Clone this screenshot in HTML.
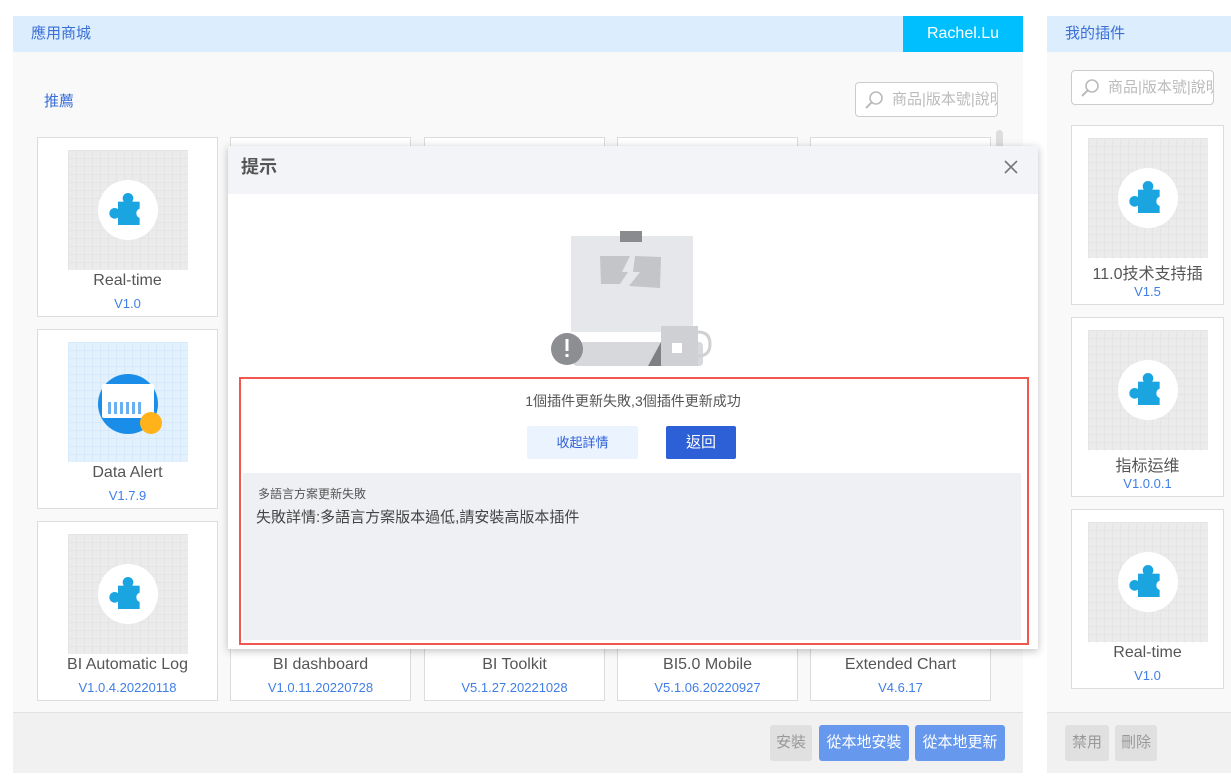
<!DOCTYPE html>
<html><head><meta charset="utf-8">
<style>
*{margin:0;padding:0;box-sizing:border-box}
body{width:1231px;height:780px;background:#fff;position:relative;overflow:hidden;font-family:"Liberation Sans","Noto Sans CJK TC",sans-serif}
.abs{position:absolute}
.hdr{background:#dcedfd;color:#3a6fd8;font-size:15px;line-height:36px;padding-left:18px}
.card{position:absolute;width:181px;height:180px;background:#fff;border:1px solid #dcdcdc;text-align:center}
.card .img{position:absolute;left:30px;top:12px;width:120px;height:120px;background-color:#ebebeb;background-image:linear-gradient(#e4e4e4 1px,transparent 1px),linear-gradient(90deg,#e4e4e4 1px,transparent 1px);background-size:8px 8px}
.card .circ{position:absolute;left:30px;top:30px;width:60px;height:60px;border-radius:50%;background:#fff}
.card .circ svg{position:absolute;left:10px;top:10px}
.card .nm{position:absolute;left:0;right:0;top:134px;font-size:16px;color:#555}
.card .vr{position:absolute;left:0;right:0;top:158px;font-size:13px;color:#3f7ee8}
.btn{position:absolute;height:36px;line-height:36px;text-align:center;font-size:15px;border-radius:3px}
</style></head><body>
<div class="abs" style="left:13px;top:16px;width:1010px;height:757px;background:#f9f9f9"></div>
<div class="abs hdr" style="left:13px;top:16px;width:1010px;height:36px">應用商城</div>
<div class="abs" style="left:903px;top:16px;width:120px;height:36px;background:#00bfff;color:#fff;font-size:16px;line-height:36px;text-align:center">Rachel.Lu</div>
<div class="abs" style="left:44px;top:90px;color:#3a6fd8;font-size:15px">推薦</div>
<div class="abs" style="left:855px;top:82px;width:143px;height:35px;border:1px solid #ccc;border-radius:4px;background:#fff;overflow:hidden;white-space:nowrap;color:#bbb;font-size:15px;line-height:33px;padding-left:36px">商品|版本號|說明
<svg class="abs" style="left:8px;top:7px" width="20" height="20" viewBox="0 0 20 20"><circle cx="12" cy="8" r="6" fill="none" stroke="#bbb" stroke-width="1.6"/><path d="M8 12 L2 18" stroke="#bbb" stroke-width="2"/></svg></div>
<div class="abs" style="left:996px;top:130px;width:7px;height:30px;border-radius:4px;background:#ddd"></div>
<div class="abs" style="left:13px;top:712px;width:1010px;height:61px;background:#f1f1f1;border-top:1px solid #e2e2e2"></div>
<div class="btn" style="left:770px;top:725px;width:42px;background:#e0e0e0;color:#999">安裝</div>
<div class="btn" style="left:819px;top:725px;width:90px;background:#6699ee;color:#fff">從本地安裝</div>
<div class="btn" style="left:915px;top:725px;width:90px;background:#6699ee;color:#fff">從本地更新</div>

<div class="abs" style="left:1047px;top:16px;width:190px;height:757px;background:#f9f9f9"></div>
<div class="abs hdr" style="left:1047px;top:16px;width:190px;height:36px">我的插件</div>
<div class="abs" style="left:1071px;top:70px;width:143px;height:35px;border:1px solid #ccc;border-radius:4px;background:#fff;overflow:hidden;white-space:nowrap;color:#bbb;font-size:15px;line-height:33px;padding-left:36px">商品|版本號|說明
<svg class="abs" style="left:8px;top:7px" width="20" height="20" viewBox="0 0 20 20"><circle cx="12" cy="8" r="6" fill="none" stroke="#bbb" stroke-width="1.6"/><path d="M8 12 L2 18" stroke="#bbb" stroke-width="2"/></svg></div>
<div class="abs" style="left:1047px;top:712px;width:190px;height:61px;background:#f1f1f1;border-top:1px solid #e2e2e2"></div>
<div class="btn" style="left:1065px;top:725px;width:44px;background:#e0e0e0;color:#999">禁用</div>
<div class="btn" style="left:1115px;top:725px;width:42px;background:#e0e0e0;color:#999">刪除</div>

<svg width="0" height="0" style="position:absolute"><defs>
<symbol id="pz" viewBox="4 2 24 24"><g fill="#1aa5e0"><rect x="10" y="9" width="13" height="14"/><circle cx="16" cy="7" r="3.2"/><circle cx="8" cy="16" r="3.2"/></g><circle cx="24" cy="16" r="3" fill="#fff"/></symbol>
</defs></svg>

<div class="card" style="left:37px;top:137px"><div class="img"><div class="circ"><svg width="40" height="40"><use href="#pz"/></svg></div></div><div class="nm">Real-time</div><div class="vr">V1.0</div></div>
<div class="card" style="left:37px;top:329px"><div class="img" style="background-color:#e3f1fd;background-image:linear-gradient(#d6eafb 1px,transparent 1px),linear-gradient(90deg,#d6eafb 1px,transparent 1px)"><div class="abs" style="left:30px;top:32px;width:60px;height:60px;border-radius:50%;background:#1a8de8"></div><div class="abs" style="left:34px;top:42px;width:52px;height:34px;background:#fff;border-radius:2px"></div><div class="abs" style="left:40px;top:60px;width:36px;height:12px;background:repeating-linear-gradient(90deg,#6ab0f0 0 3px,transparent 3px 6px)"></div><div class="abs" style="left:72px;top:70px;width:22px;height:22px;border-radius:50%;background:#ffb21a"></div></div><div class="nm">Data Alert</div><div class="vr">V1.7.9</div></div>
<div class="card" style="left:37px;top:521px"><div class="img"><div class="circ"><svg width="40" height="40"><use href="#pz"/></svg></div></div><div class="nm">BI Automatic Log</div><div class="vr">V1.0.4.20220118</div></div>
<div class="card" style="left:230px;top:137px"></div><div class="card" style="left:424px;top:137px"></div><div class="card" style="left:617px;top:137px"></div><div class="card" style="left:810px;top:137px"></div>
<div class="card" style="left:230px;top:521px"><div class="nm">BI dashboard</div><div class="vr">V1.0.11.20220728</div></div>
<div class="card" style="left:424px;top:521px"><div class="nm">BI Toolkit</div><div class="vr">V5.1.27.20221028</div></div>
<div class="card" style="left:617px;top:521px"><div class="nm">BI5.0 Mobile</div><div class="vr">V5.1.06.20220927</div></div>
<div class="card" style="left:810px;top:521px"><div class="nm">Extended Chart</div><div class="vr">V4.6.17</div></div>

<div class="card" style="left:1071px;top:125px;width:153px"><div class="img" style="left:16px"><div class="circ"><svg width="40" height="40"><use href="#pz"/></svg></div></div><div class="nm">11.0技术支持插</div><div class="vr">V1.5</div></div>
<div class="card" style="left:1071px;top:317px;width:153px"><div class="img" style="left:16px"><div class="circ"><svg width="40" height="40"><use href="#pz"/></svg></div></div><div class="nm">指标运维</div><div class="vr">V1.0.0.1</div></div>
<div class="card" style="left:1071px;top:509px;width:153px"><div class="img" style="left:16px"><div class="circ"><svg width="40" height="40"><use href="#pz"/></svg></div></div><div class="nm">Real-time</div><div class="vr">V1.0</div></div>

<div class="abs" style="left:228px;top:146px;width:810px;height:503px;background:#fff;box-shadow:0 2px 8px rgba(0,0,0,.25)">
 <div class="abs" style="left:0;top:0;width:810px;height:48px;background:#f2f4f8;color:#555;font-size:18px;font-weight:bold;line-height:42px;padding-left:13px">提示</div>
 <svg class="abs" style="left:774px;top:12px" width="18" height="18" viewBox="0 0 18 18"><path d="M3 3L15 15M15 3L3 15" stroke="#777" stroke-width="1.6"/></svg>
 <svg class="abs" style="left:320px;top:82px" width="170" height="140" viewBox="0 0 170 140">
  <rect x="23" y="8" width="122" height="96" fill="#e6e7ea"/>
  <rect x="72" y="3" width="22" height="11" fill="#8a8b8e"/>
  <polygon points="52,28 82,28 74,44 80,44 72,56 53,56" fill="#c4c5c8"/>
  <polygon points="87,28 113,29 112,60 81,58 92,44 85,44" fill="#c4c5c8"/>
  <rect x="25" y="114" width="130" height="24" rx="4" fill="#d7d8db"/>
  <circle cx="19" cy="121" r="16" fill="#8d8e92"/>
  <rect x="17.5" y="111" width="3" height="12" fill="#fff"/><rect x="17.5" y="126" width="3" height="3" fill="#fff"/>
  <polygon points="100,138 113,114 120,138" fill="#7f8084"/>
  <path d="M113 98 h37 v40 h-37z" fill="#cfd0d3"/><path d="M150 104 q12 0 12 12 q0 12 -12 12" fill="none" stroke="#cfd0d3" stroke-width="3"/>
  <rect x="124" y="115" width="10" height="10" fill="#fff"/>
 </svg>
 <div class="abs" style="left:11px;top:231px;width:790px;height:268px;border:2px solid #f0574e"></div>
 <div class="abs" style="left:0;width:810px;top:245px;text-align:center;font-size:14px;color:#555">1個插件更新失敗,3個插件更新成功</div>
 <div class="abs" style="left:299px;top:280px;width:111px;height:33px;background:#ebf3fe;color:#2d5fd6;font-size:13px;line-height:33px;text-align:center;border-radius:2px">收起詳情</div>
 <div class="abs" style="left:438px;top:280px;width:70px;height:33px;background:#2d5fd6;color:#fff;font-size:15px;line-height:33px;text-align:center;border-radius:2px">返回</div>
 <div class="abs" style="left:15px;top:327px;width:778px;height:167px;background:#eef0f4"></div>
 <div class="abs" style="left:30px;top:339px;font-size:12px;color:#555">多語言方案更新失敗</div>
 <div class="abs" style="left:28px;top:360px;font-size:15px;color:#444">失敗詳情:多語言方案版本過低,請安裝高版本插件</div>
</div>
</body></html>
